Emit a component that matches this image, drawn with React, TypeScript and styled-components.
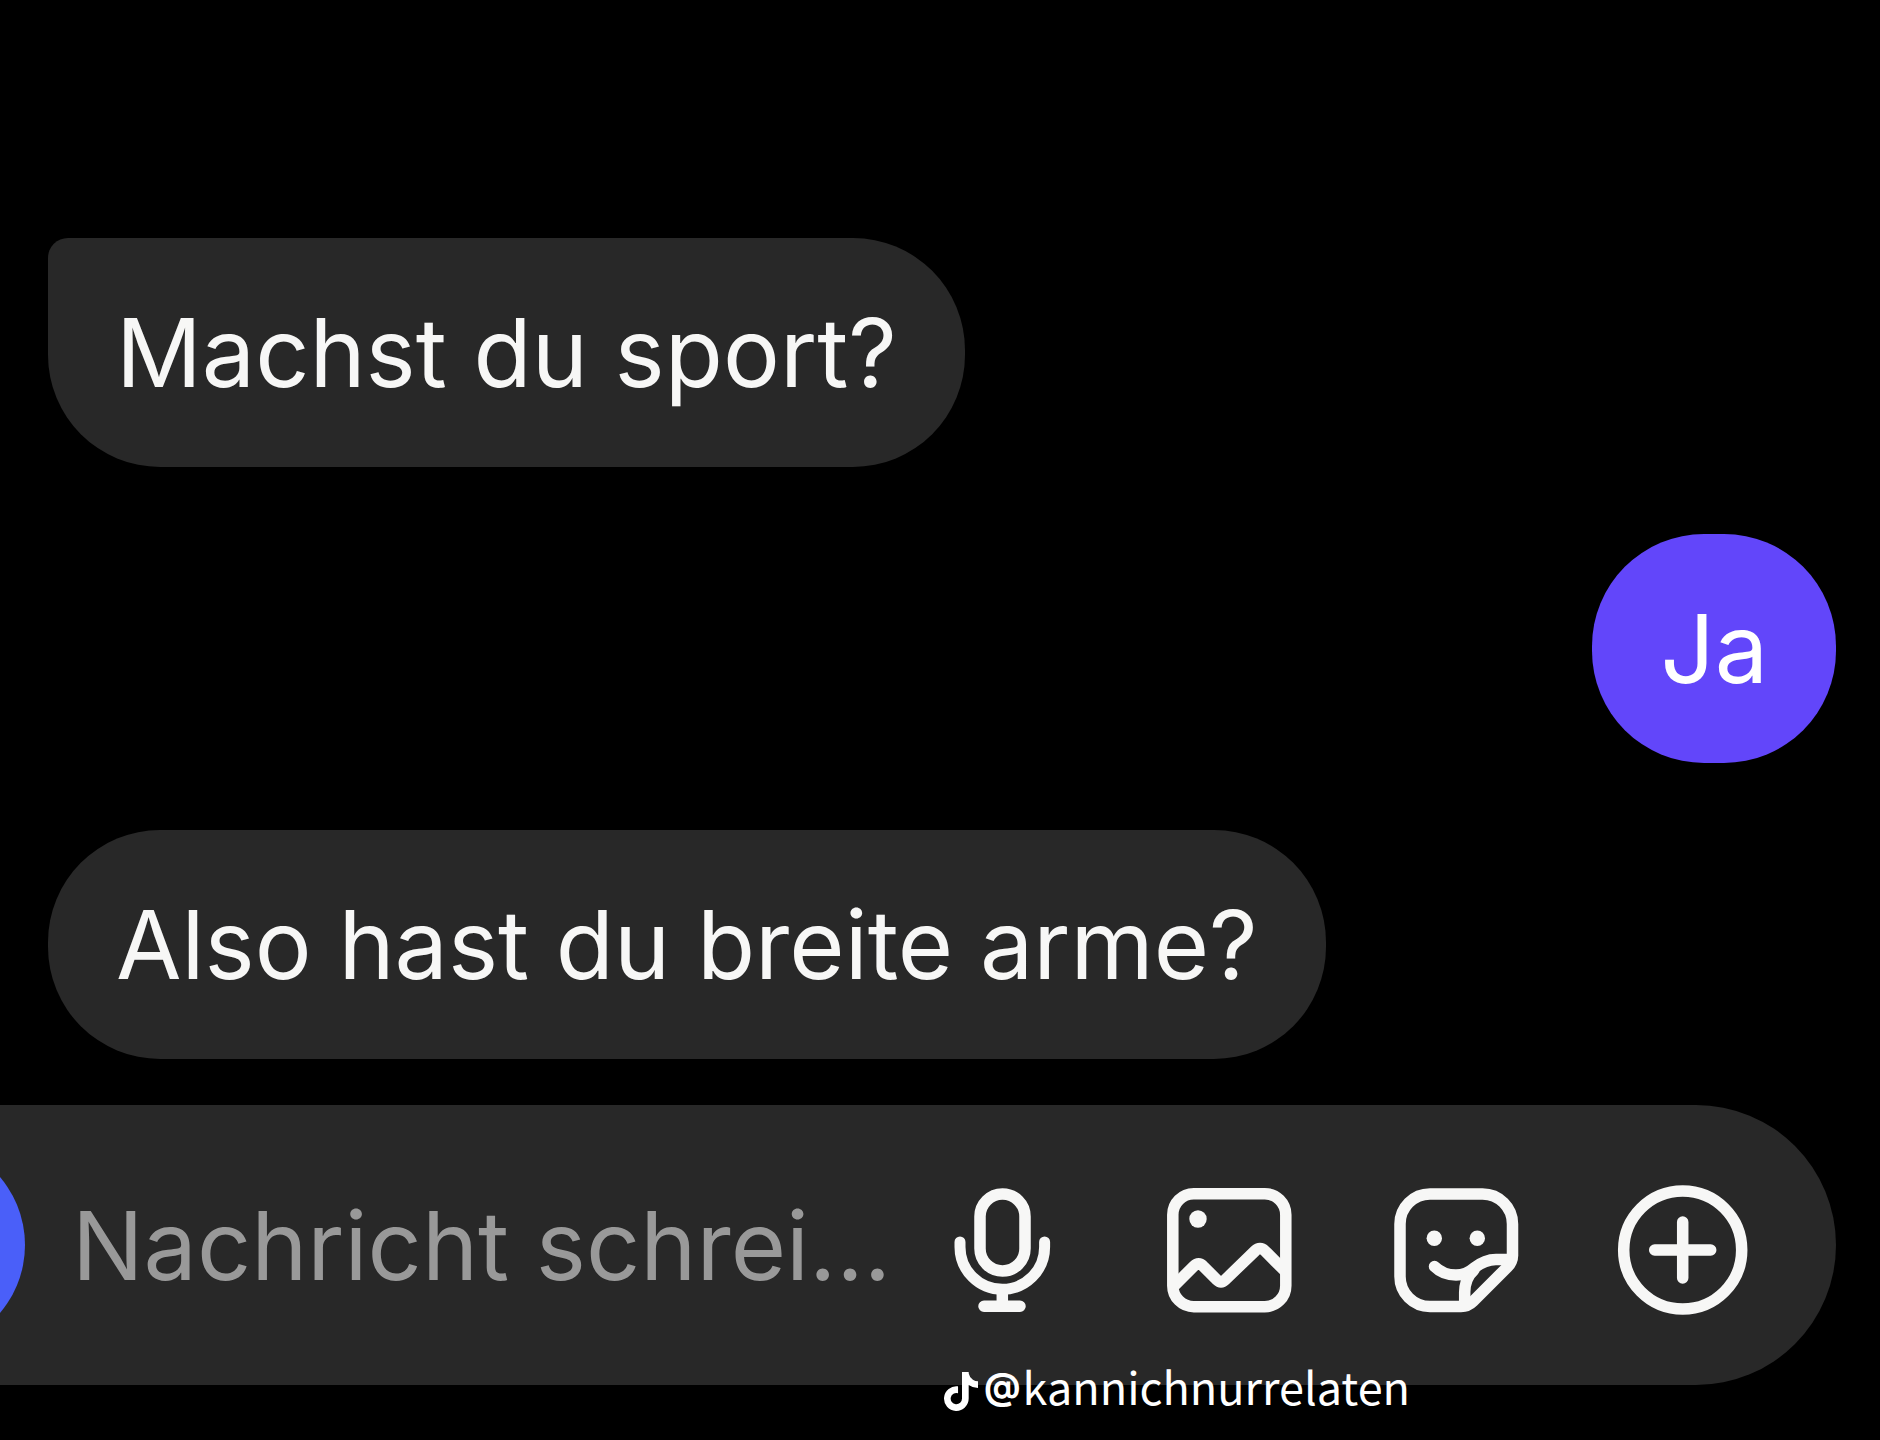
import React, { useState } from "react";
import styled, { createGlobalStyle } from "styled-components";
import { FaTiktok } from "react-icons/fa6";

const GlobalStyle = createGlobalStyle`
  *, *::before, *::after { box-sizing: border-box; }
  body {
    margin: 0;
    background: #000;
    font-family: Inter, "Liberation Sans", sans-serif;
  }
`;

const Page = styled.main`
  position: relative;
  display: flex;
  flex-direction: column;
  justify-content: flex-end;
  min-height: 100vh;
  padding-bottom: 55px;
  overflow: hidden;
  background: #000;
`;

const Messages = styled.ol`
  display: flex;
  flex-direction: column;
  gap: 67px;
  margin: 0;
  padding: 0 44px 46px 48px;
  list-style: none;
`;

const Bubble = styled.li<{ $own?: boolean; $first?: boolean }>`
  align-self: ${(p) => (p.$own ? "flex-end" : "flex-start")};
  padding: 56px 68px;
  border-radius: 112px;
  border-top-left-radius: ${(p) => (p.$first ? "20px" : "112px")};
  background: ${(p) => (p.$own ? "#6246fa" : "#282828")};
  color: ${(p) => (p.$own ? "#fff" : "#f7f7f6")};
  font-size: 95px;
  line-height: 117px;
`;

const Composer = styled.form`
  display: flex;
  align-items: center;
  height: 280px;
  margin: 0 44px 0 -220px;
  padding: 0 87px 0 35px;
  border-radius: 140px;
  background: #282828;
`;

const CameraButton = styled.button`
  flex: none;
  width: 210px;
  height: 210px;
  padding: 0;
  border: 0;
  border-radius: 50%;
  background: #4a5ff9;
`;

const Field = styled.input`
  flex: 1;
  min-width: 0;
  height: 117px;
  margin-left: 47px;
  padding: 0;
  border: 0;
  outline: 0;
  background: transparent;
  color: #f7f7f6;
  font: inherit;
  font-size: 95px;
  line-height: 117px;
  &::placeholder {
    color: #999;
    opacity: 1;
  }
`;

const Actions = styled.div`
  display: flex;
  flex: none;
  gap: 95px;
  padding-top: 10px;
`;

const IconButton = styled.button`
  display: block;
  width: 132px;
  height: 132px;
  padding: 0;
  border: 0;
  background: none;
  color: #f7f7f6;
  cursor: pointer;
`;

const Icon = styled.svg`
  display: block;
  width: 100%;
  height: 100%;
  fill: none;
  stroke: currentColor;
  stroke-width: 11.5;
  stroke-linecap: round;
  stroke-linejoin: round;
  .solid {
    fill: currentColor;
    stroke: none;
  }
`;

const Watermark = styled.div`
  position: absolute;
  bottom: 21px;
  left: 50%;
  display: flex;
  align-items: center;
  padding-left: 4px;
  color: #fff;
  font-family: "Noto Sans CJK SC", "Noto Sans", sans-serif;
  font-size: 45px;
  line-height: 66px;
  white-space: nowrap;
`;

const TikTokLogo = styled(FaTiktok)`
  width: 34px;
  height: 39px;
  margin: 10px 6px 0 0;
`;

const AtSign = styled.span`
  margin-right: 2px;
  font-family: Inter, sans-serif;
  font-size: 36px;
  font-weight: 700;
`;

const messages = [
  { text: "Machst du sport?", first: true },
  { text: "Ja", own: true },
  { text: "Also hast du breite arme?" },
];

const MicIcon = () => (
  <Icon viewBox="0 0 132 132" aria-hidden="true">
    <rect x="44" y="10" width="45" height="77" rx="22.5" />
    <path d="M24 58v5a42.3 42.3 0 0 0 84.6 0v-5" strokeWidth="11" />
    <path d="M66.3 106v15M48 122.3h36" />
  </Icon>
);

const ImageIcon = () => (
  <Icon viewBox="0 0 132 132" aria-hidden="true">
    <rect x="9.8" y="9.7" width="113" height="113" rx="21" />
    <circle className="solid" cx="35" cy="35" r="8.7" />
    <path d="M12 101L31 82Q35.7 77.5 40 82L54 96Q58 100 62 96L92 67Q97 62 102 67L122 87" />
  </Icon>
);

const StickerIcon = () => (
  <Icon viewBox="0 0 132 132" aria-hidden="true">
    <path d="M122.5 72V40a30 30 0 0 0-30-30H40a30 30 0 0 0-30 30v52.5a30 30 0 0 0 30 30h31q7 0 12-5L117.5 83Q122.5 78 122.5 71" />
    <circle className="solid" cx="44.3" cy="54.3" r="7.7" />
    <circle className="solid" cx="87.3" cy="54.3" r="7.7" />
    <path d="M44.5 82.5Q53 91 66 91Q76 91 84 84Q95 75.5 106 75.5H120" />
    <path d="M74.7 120V108Q75 94 84 86" />
  </Icon>
);

const PlusIcon = () => (
  <Icon viewBox="0 0 132 132" aria-hidden="true">
    <circle cx="65.7" cy="66" r="59" />
    <path d="M65.7 38v56M37.7 66h56" />
  </Icon>
);

const actions = [
  { label: "Sprachnachricht", Glyph: MicIcon },
  { label: "Bild", Glyph: ImageIcon },
  { label: "Sticker", Glyph: StickerIcon },
  { label: "Mehr", Glyph: PlusIcon },
];

export default function App() {
  const [draft, setDraft] = useState("");

  return (
    <>
      <GlobalStyle />
      <Page>
        <Messages>
          {messages.map((m) => (
            <Bubble key={m.text} $own={m.own} $first={m.first}>
              {m.text}
            </Bubble>
          ))}
        </Messages>
        <Composer onSubmit={(e) => e.preventDefault()}>
          <CameraButton type="button" aria-label="Kamera" />
          <Field
            aria-label="Nachricht"
            placeholder="Nachricht schrei…"
            value={draft}
            onChange={(e) => setDraft(e.target.value)}
          />
          <Actions>
            {actions.map(({ label, Glyph }) => (
              <IconButton key={label} type="button" aria-label={label}>
                <Glyph />
              </IconButton>
            ))}
          </Actions>
        </Composer>
        <Watermark>
          <TikTokLogo aria-hidden="true" />
          <AtSign>@</AtSign>
          <span>kannichnurrelaten</span>
        </Watermark>
      </Page>
    </>
  );
}
